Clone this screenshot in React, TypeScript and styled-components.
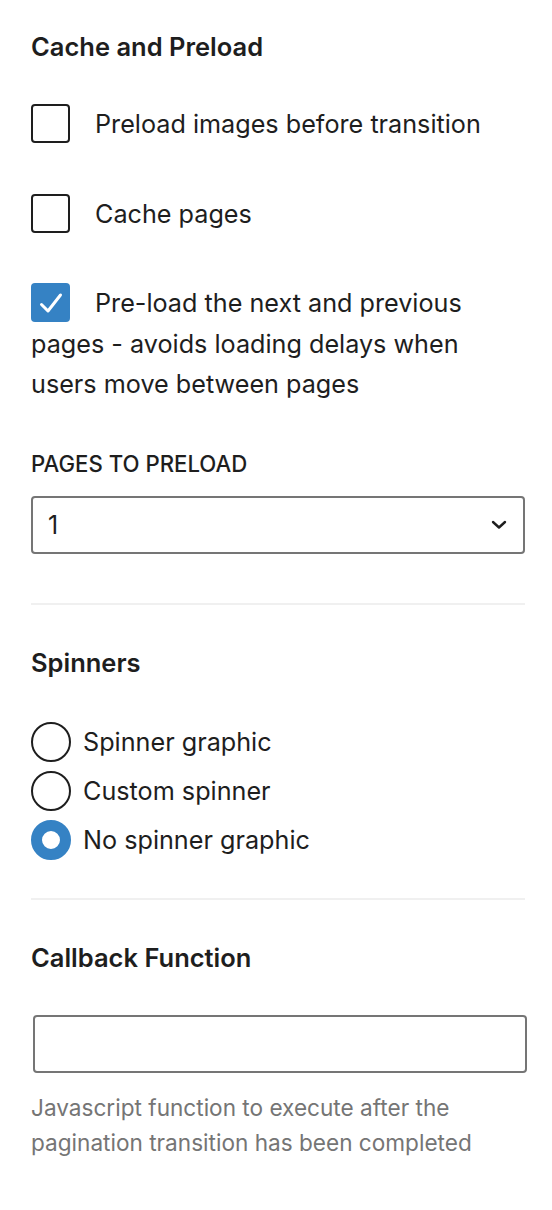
import React, { useState } from "react";
import styled, { createGlobalStyle } from "styled-components";

const GlobalStyle = createGlobalStyle`
  body {
    margin: 0;
    background: #ffffff;
    font-family: Inter, "Noto Sans", "Liberation Sans", sans-serif;
    color: #1e1e1e;
  }
`;

export default function App() {
  const [cache, setCache] = useState({
    preloadImages: false,
    cachePages: false,
    preloadPages: true,
  });
  const [spinner, setSpinner] = useState("none");

  const toggle = (key: keyof typeof cache) =>
    setCache((c) => ({ ...c, [key]: !c[key] }));

  return (
    <Panel>
      <GlobalStyle />
      <Heading>Cache and Preload</Heading>

      <CheckRow onClick={() => toggle("preloadImages")}>
        <CheckBox checked={cache.preloadImages}>
          {cache.preloadImages && <CheckMark />}
        </CheckBox>
        Preload images before transition
      </CheckRow>
      <CheckRow onClick={() => toggle("cachePages")}>
        <CheckBox checked={cache.cachePages}>
          {cache.cachePages && <CheckMark />}
        </CheckBox>
        Cache pages
      </CheckRow>
      <CheckRow onClick={() => toggle("preloadPages")}>
        <CheckBox checked={cache.preloadPages}>
          {cache.preloadPages && <CheckMark />}
        </CheckBox>
        Pre-load the next and previous pages - avoids loading delays when
        users move between pages
      </CheckRow>

      <FieldLabel>Pages to preload</FieldLabel>
      <SelectBox>
        <span>1</span>
        <Chevron />
      </SelectBox>

      <Divider />

      <Heading>Spinners</Heading>
      <RadioList>
        {[
          { id: "graphic", label: "Spinner graphic" },
          { id: "custom", label: "Custom spinner" },
          { id: "none", label: "No spinner graphic" },
        ].map((opt) => (
          <RadioRow key={opt.id} onClick={() => setSpinner(opt.id)}>
            <RadioDot selected={spinner === opt.id} />
            {opt.label}
          </RadioRow>
        ))}
      </RadioList>

      <Divider />

      <Heading>Callback Function</Heading>
      <TextInput type="text" />
      <Help>
        Javascript function to execute after the pagination transition has
        been completed
      </Help>
    </Panel>
  );
}

const CheckMark = () => (
  <svg width="38" height="38" viewBox="0 0 38 38" fill="none">
    <path
      d="M9.5 20.5 L16 27 L28.5 11"
      stroke="#ffffff"
      strokeWidth="3"
      strokeLinecap="round"
      strokeLinejoin="round"
    />
  </svg>
);

const Chevron = () => (
  <svg width="16" height="10" viewBox="0 0 16 10" fill="none">
    <path
      d="M2 2 L8 7.5 L14 2"
      stroke="#1e1e1e"
      strokeWidth="2.4"
      strokeLinecap="round"
      strokeLinejoin="round"
    />
  </svg>
);

const Panel = styled.div`
  width: 494px;
  padding: 32px 27px 40px 31px;
`;

const Heading = styled.h2`
  margin: 0 0 42px;
  font-size: 25.5px;
  line-height: 30px;
  font-weight: 600;
  color: #1e1e1e;
`;

const CheckRow = styled.div`
  font-size: 25.2px;
  line-height: 40.5px;
  margin-bottom: 49px;
  cursor: pointer;

  &:nth-of-type(3) {
    margin-bottom: 47px;
  }
`;

const CheckBox = styled.span<{ checked: boolean }>`
  display: inline-flex;
  vertical-align: top;
  box-sizing: border-box;
  width: 39px;
  height: 39px;
  margin-right: 25px;
  border-radius: 4px;
  border: ${(p) => (p.checked ? "none" : "2.5px solid #1e1e1e")};
  background: ${(p) => (p.checked ? "#3582c4" : "#ffffff")};
  align-items: center;
  justify-content: center;
`;

const FieldLabel = styled.div`
  font-size: 22.2px;
  line-height: 24px;
  font-weight: 500;
  text-transform: uppercase;
  margin-bottom: 20px;
`;

const SelectBox = styled.div`
  box-sizing: border-box;
  height: 58px;
  border: 2px solid #757575;
  border-radius: 4px;
  display: flex;
  align-items: center;
  justify-content: space-between;
  padding: 0 16px 0 15px;
  font-size: 25px;
`;

const Divider = styled.hr`
  border: none;
  height: 2px;
  background: #f0f0f0;
  margin: 49px 0 43px;
`;

const RadioList = styled.div`
  display: flex;
  flex-direction: column;
  gap: 9px;
  margin-top: 44px;
  margin-bottom: 38px;
  & + ${Divider} {
    margin-top: 0;
  }
`;

const RadioRow = styled.div`
  display: flex;
  align-items: center;
  gap: 12px;
  font-size: 25.2px;
  line-height: 40px;
  cursor: pointer;
`;

const RadioDot = styled.span<{ selected: boolean }>`
  box-sizing: border-box;
  width: 40px;
  height: 40px;
  border-radius: 50%;
  flex-shrink: 0;
  border: ${(p) => (p.selected ? "11.5px solid #3582c4" : "2.5px solid #1e1e1e")};
  background: #ffffff;
`;

const TextInput = styled.input`
  display: block;
  box-sizing: border-box;
  width: 494px;
  height: 58px;
  margin: 0 0 0 2px;
  border: 2px solid #757575;
  border-radius: 4px;
  font-size: 25px;
  padding: 0 14px;
  outline: none;
`;

const Help = styled.p`
  margin: 17px 0 0;
  font-size: 22.6px;
  line-height: 35px;
  color: #757575;
`;
